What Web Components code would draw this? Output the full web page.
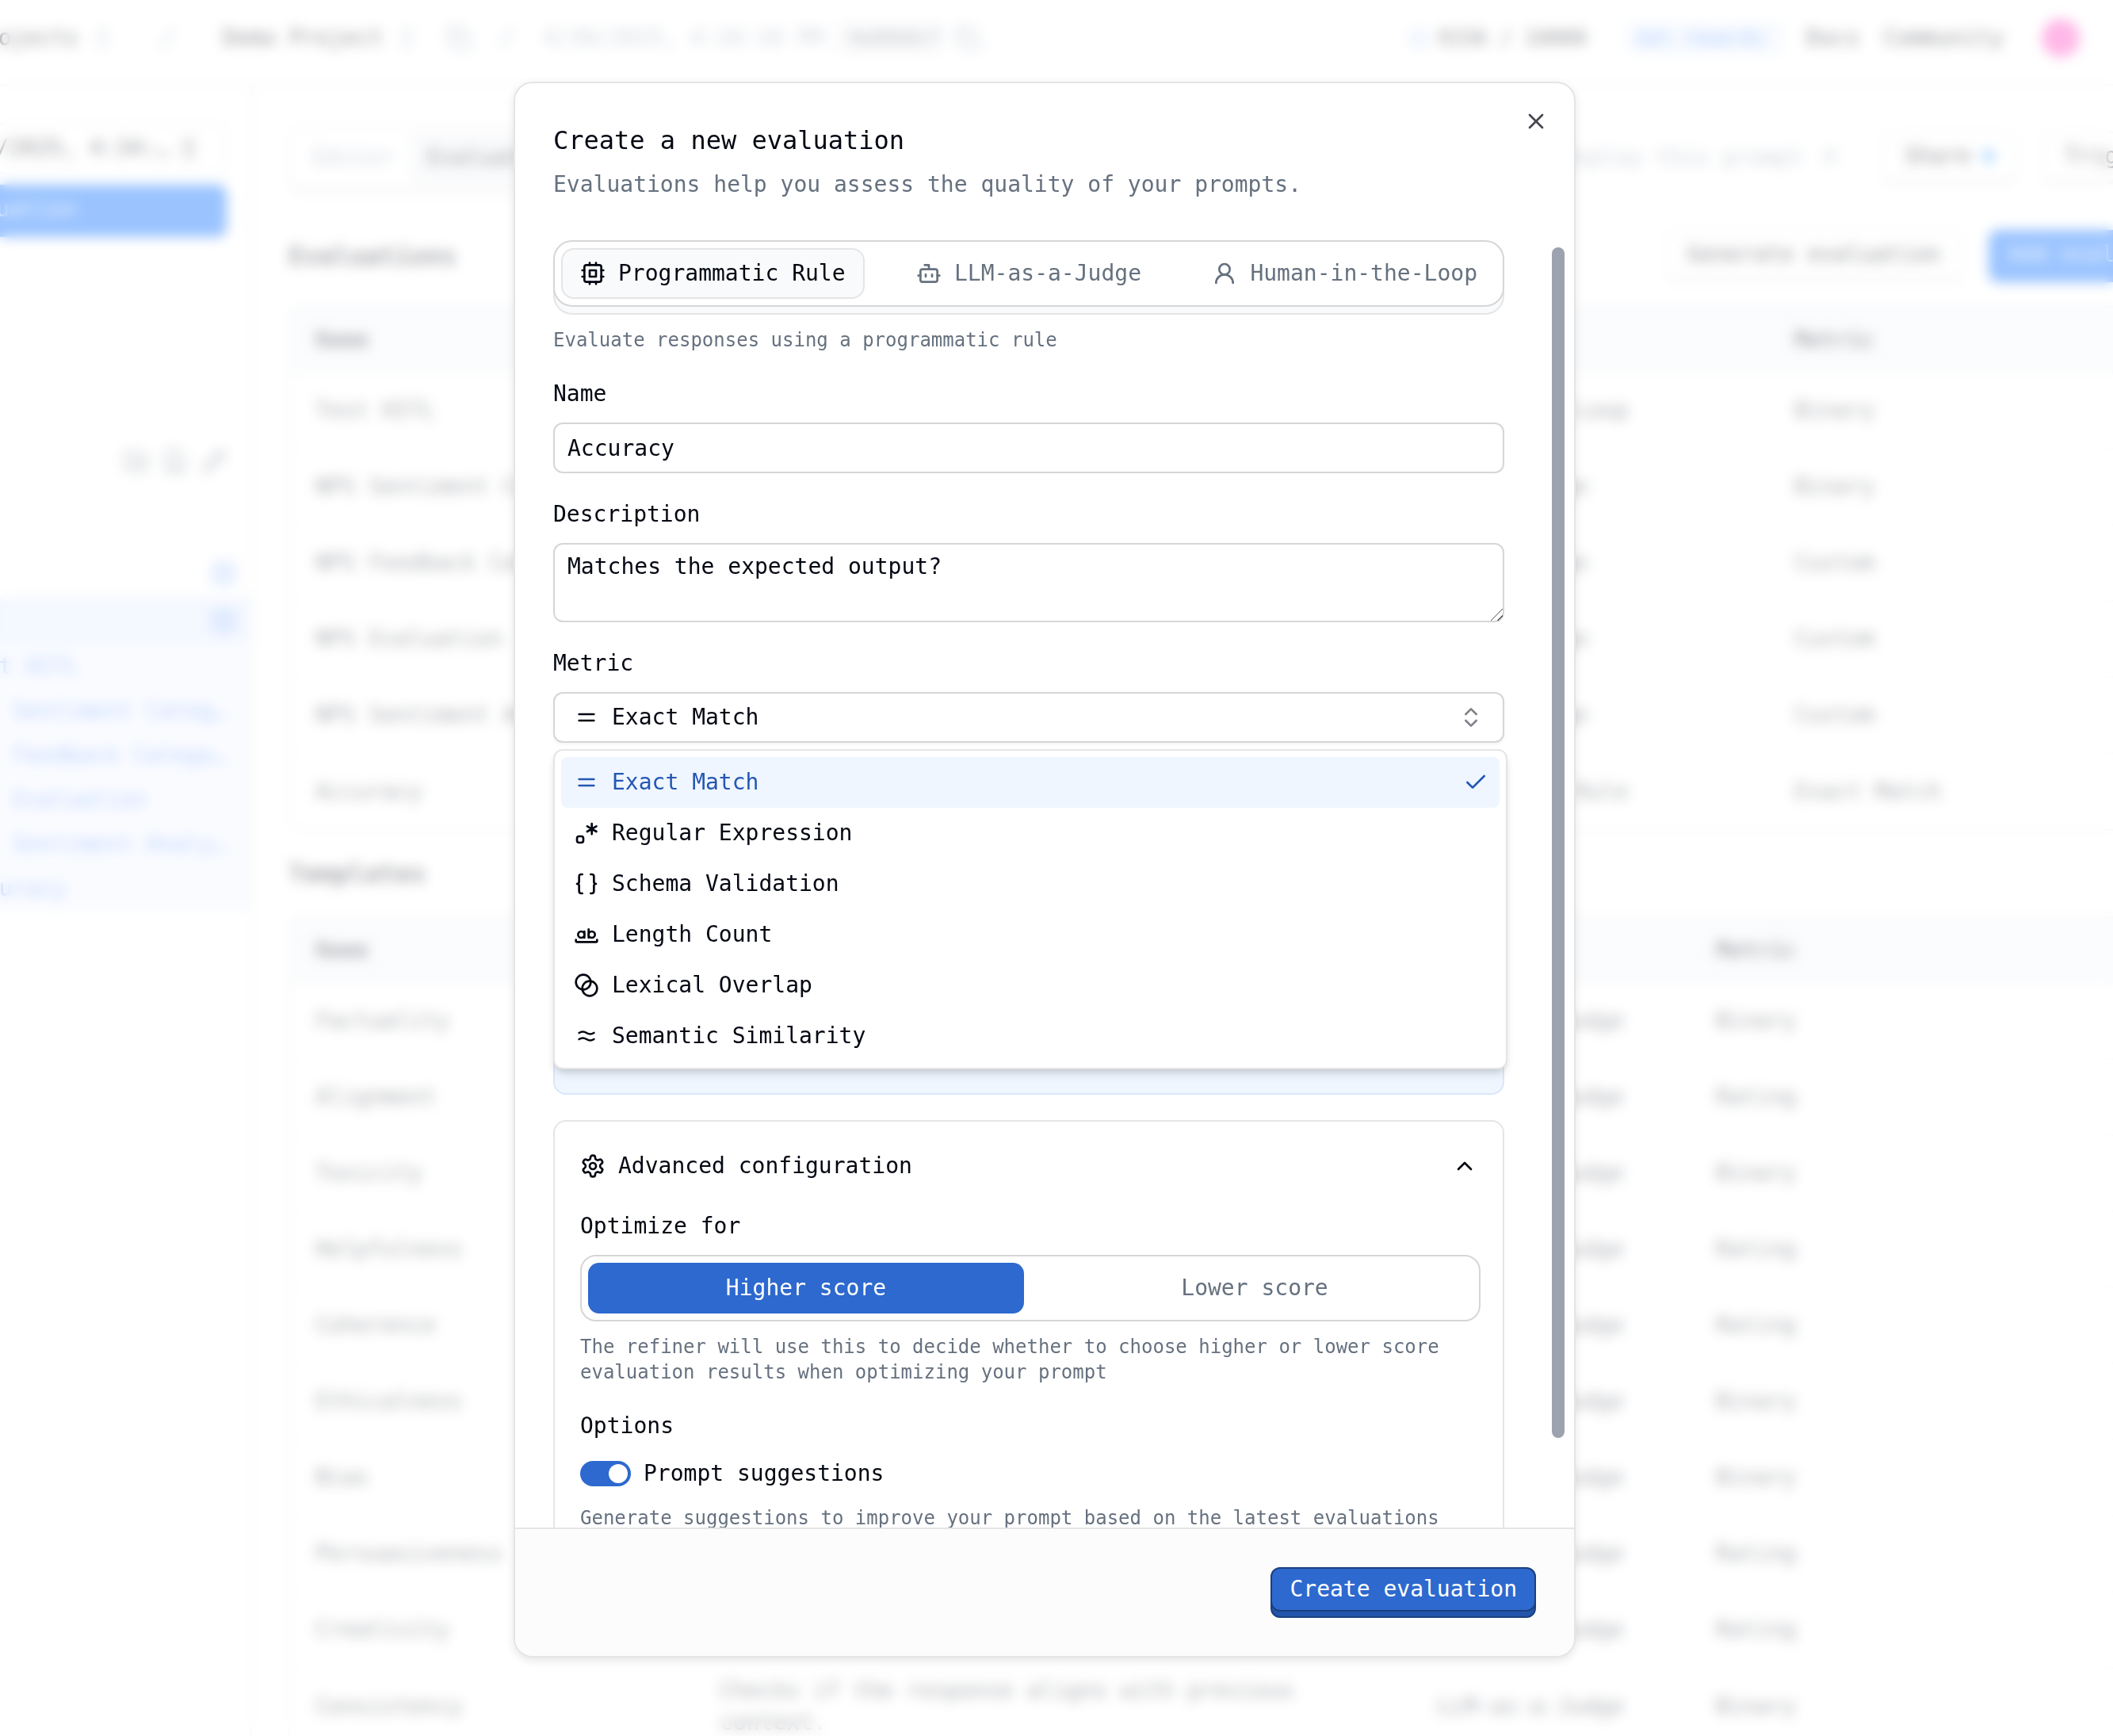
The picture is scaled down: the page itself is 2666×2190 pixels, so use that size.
<!DOCTYPE html>
<html lang="en">
<head>
<meta charset="utf-8">
<title>Create a new evaluation</title>
<style>
  html, body { margin: 0; height: 100%; }
  body {
    --fg: #030712; --muted: #66717f; --line: #e5e5e5; --input: #d6d6d6;
    --primary: #2d69ce; --accent: #eff6ff; --accent-fg: #2457b3; --soft: #f9fafb;
    background: #fff; color: var(--fg); overflow: hidden;
    font: 28px/40px "DejaVu Sans Mono", "Liberation Mono", monospace;
  }
</style>
</head>
<body>
<app-page></app-page>
<modal-dialog heading="Create a new evaluation" summary="Evaluations help you assess the quality of your prompts.">
  <evaluation-form></evaluation-form>
  <primary-button slot="footer">Create evaluation</primary-button>
</modal-dialog>

<script>
const BASE = `*{box-sizing:border-box;margin:0}button,input,textarea,select{font:inherit;color:inherit}button{background:none;border:0;padding:0}`;
function define(name, render) {
  customElements.define(name, class extends HTMLElement {
    constructor() { super(); this.attachShadow({ mode: "open" }); }
    connectedCallback() {
      if (this.shadowRoot.childNodes.length) return;
      const t = document.createElement("template");
      t.innerHTML = render(this);
      this.shadowRoot.append(t.content.cloneNode(true));
    }
  });
}

const ICONS = {
  cpu: '<rect x="4" y="4" width="16" height="16" rx="2"/><rect x="9" y="9" width="6" height="6"/><path d="M15 2v2M15 20v2M2 15h2M2 9h2M20 15h2M20 9h2M9 2v2M9 20v2"/>',
  bot: '<path d="M12 8V4H8"/><rect width="16" height="12" x="4" y="8" rx="2"/><path d="M2 14h2M20 14h2M15 13v2M9 13v2"/>',
  user: '<circle cx="12" cy="8" r="5"/><path d="M20 21a8 8 0 0 0-16 0"/>',
  equal: '<path d="M5 9h14M5 15h14"/>',
  regex: '<path d="M17 3v10M12.67 5.5l8.66 5M12.67 10.5l8.66-5M9 17a2 2 0 0 0-2-2H5a2 2 0 0 0-2 2v2a2 2 0 0 0 2 2h2a2 2 0 0 0 2-2v-2z"/>',
  braces: '<path d="M8 3H7a2 2 0 0 0-2 2v5a2 2 0 0 1-2 2 2 2 0 0 1 2 2v5c0 1.1.9 2 2 2h1M16 21h1a2 2 0 0 0 2-2v-5c0-1.1.9-2 2-2a2 2 0 0 1-2-2V5a2 2 0 0 0-2-2h-1"/>',
  word: '<circle cx="7" cy="12" r="3"/><path d="M10 9v6"/><circle cx="17" cy="12" r="3"/><path d="M14 7v8M22 17v1c0 .5-.5 1-1 1H3c-.5 0-1-.5-1-1v-1"/>',
  blend: '<circle cx="9" cy="9" r="7"/><circle cx="15" cy="15" r="7"/>',
  approx: '<path d="M5 15a6.5 6.5 0 0 1 7 0 6.5 6.5 0 0 0 7 0M5 9a6.5 6.5 0 0 1 7 0 6.5 6.5 0 0 0 7 0"/>',
  settings: '<path d="M12.22 2h-.44a2 2 0 0 0-2 2v.18a2 2 0 0 1-1 1.73l-.43.25a2 2 0 0 1-2 0l-.15-.08a2 2 0 0 0-2.73.73l-.22.38a2 2 0 0 0 .73 2.73l.15.1a2 2 0 0 1 1 1.72v.51a2 2 0 0 1-1 1.74l-.15.09a2 2 0 0 0-.73 2.73l.22.38a2 2 0 0 0 2.73.73l.15-.08a2 2 0 0 1 2 0l.43.25a2 2 0 0 1 1 1.73V20a2 2 0 0 0 2 2h.44a2 2 0 0 0 2-2v-.18a2 2 0 0 1 1-1.73l.43-.25a2 2 0 0 1 2 0l.15.08a2 2 0 0 0 2.73-.73l.22-.39a2 2 0 0 0-.73-2.73l-.15-.08a2 2 0 0 1-1-1.74v-.5a2 2 0 0 1 1-1.74l.15-.09a2 2 0 0 0 .73-2.73l-.22-.38a2 2 0 0 0-2.73-.73l-.15.08a2 2 0 0 1-2 0l-.43-.25a2 2 0 0 1-1-1.73V4a2 2 0 0 0-2-2z"/><circle cx="12" cy="12" r="3"/>',
  up: '<path d="M18 15l-6-6-6 6"/>',
  updown: '<path d="M7 15l5 5 5-5M7 9l5-5 5 5"/>',
  check: '<path d="M20 6L9 17l-5-5"/>',
  close: '<path d="M18 6L6 18M6 6l12 12"/>',
  copy: '<rect x="8" y="8" width="14" height="14" rx="2"/><path d="M4 16c-1.100 0-2-.9-2-2V4c0-1.100.9-2 2-2h10c1.100 0 2 .9 2 2"/>',
  folder: '<path d="M12 10v6M9 13h6M20 20a2 2 0 0 0 2-2V8a2 2 0 0 0-2-2h-8L10 3H4a2 2 0 0 0-2 2v13a2 2 0 0 0 2 2z"/>',
  file: '<path d="M15 2H6a2 2 0 0 0-2 2v16a2 2 0 0 0 2 2h12a2 2 0 0 0 2-2V7zM9 15h6M12 18v-6"/>',
  pencil: '<path d="M21 7a3 3 0 0 0-4-4L4 16l-2 6 6-2zM15 5l4 4"/>',
  square: '<rect x="3" y="3" width="18" height="18" rx="2"/><path d="M12 8v8M8 12h8"/>',
  slash: '<path d="M17 3L7 21"/>',
  external: '<path d="M7 17L17 7M8 7h9v9"/>'
};
define("ui-icon", el => `<style>:host{display:block;flex:none;width:32px;height:32px}svg{display:block;width:100%;height:100%;fill:none;stroke:currentColor;stroke-width:2;stroke-linecap:round;stroke-linejoin:round}</style>
<svg viewBox="0 0 24 24" aria-hidden="true">${ICONS[el.getAttribute("name")]}</svg>`);

define("primary-button", () => `<style>${BASE}
:host{display:block;height:64px}
button{display:block;height:56px;padding:0 22px;border:2px solid #1b407f;border-radius:12px;background:var(--primary);color:#fff;line-height:52px;box-shadow:0 8px 0 -2px #2454ab,0 8px 0 0 #1b407f}
</style><button type="button"><slot></slot></button>`);

define("modal-dialog", el => `<style>${BASE}
:host{position:fixed;inset:0;display:flex;justify-content:center;padding:103px 30px 99px 0;background:rgba(255,255,255,.6);-webkit-backdrop-filter:blur(8px);backdrop-filter:blur(8px)}
section{position:relative;display:flex;flex-direction:column;width:1340px;max-width:100%;border:2px solid var(--line);border-radius:24px;background:#fff;overflow:hidden;box-shadow:0 4px 12px rgba(0,0,0,.1)}
header{padding:48px;display:flex;flex-direction:column;gap:12px}
h2{font-size:32px;line-height:48px;font-weight:500}
p{color:var(--muted)}
.x{position:absolute;top:32px;right:32px;color:#45474f}
.body{flex:1;min-height:0;display:flex;gap:60px;padding:2px 12px 0 48px}
.content{flex:1;min-width:0;overflow:visible}
.track{width:16px;padding-top:9px}
.thumb{height:93%;border-radius:8px;background:#9ca3af}
footer{position:relative;display:flex;justify-content:flex-end;padding:48px;border-top:2px solid var(--line);background:#fcfcfc}
</style>
<section role="dialog" aria-modal="true" aria-labelledby="t">
<header><h2 id="t">${el.getAttribute("heading")}</h2><p>${el.getAttribute("summary")}</p></header>
<button class="x" type="button" aria-label="Close"><ui-icon name="close"></ui-icon></button>
<div class="body"><div class="content"><slot></slot></div><div class="track"><div class="thumb"></div></div></div>
<footer><slot name="footer"></slot></footer>
</section>`);

define("type-tabs", () => `<style>${BASE}
:host{display:block;padding-bottom:10px}
div{display:flex;justify-content:space-between;height:84px;padding:8px;border:2px solid var(--input);border-radius:24px;background:#fff;box-shadow:0 10px 0 -2px var(--soft),0 10px 0 0 var(--line)}
button{display:flex;align-items:center;gap:16px;padding:0 22px;border:2px solid transparent;border-radius:16px;color:var(--muted);white-space:nowrap}
button[aria-selected=true]{color:var(--fg);background:var(--soft);border-color:var(--line)}
</style><div role="tablist">
<button type="button" role="tab" aria-selected="true"><ui-icon name="cpu"></ui-icon>Programmatic Rule</button>
<button type="button" role="tab" aria-selected="false"><ui-icon name="bot"></ui-icon>LLM-as-a-Judge</button>
<button type="button" role="tab" aria-selected="false"><ui-icon name="user"></ui-icon>Human-in-the-Loop</button></div>`);

define("text-field", el => {
  const area = el.hasAttribute("multiline"), v = el.getAttribute("value");
  return `<style>${BASE}
:host{display:flex;flex-direction:column;gap:16px}label{font-weight:500}
input,textarea{display:block;width:100%;border:2px solid var(--input);border-radius:12px;background:#fff;padding:0 16px;outline:0}
input{height:64px}textarea{height:100px;padding:8px 16px;resize:vertical}
textarea::-webkit-resizer{background:linear-gradient(135deg,transparent 47%,#555 47% 53%,transparent 53% 76%,#555 76% 82%,transparent 82%)}
</style><label for="c">${el.getAttribute("label")}</label>
${area ? `<textarea id="c">${v}</textarea>` : `<input id="c" type="text" value="${v}">`}`;
});

const METRICS = [["equal","Exact Match"],["regex","Regular Expression"],["braces","Schema Validation"],["word","Length Count"],["blend","Lexical Overlap"],["approx","Semantic Similarity"]];
define("metric-select", () => `<style>${BASE}
:host{display:flex;flex-direction:column;gap:16px}label{font-weight:500}
.box{position:relative;display:grid;align-items:center}
.box>*{grid-area:1/1}
select{appearance:none;width:100%;height:64px;padding:0 72px;border:2px solid var(--input);border-radius:12px;background:#fff;outline:0;box-shadow:0 2px 4px rgba(0,0,0,.05)}
.lead{margin-left:26px;z-index:1}.tail{margin-right:26px;justify-self:end;z-index:1;color:#81838a}
ul{position:absolute;z-index:2;top:calc(100% + 8px);left:0;right:-4px;list-style:none;padding:8px;border:2px solid var(--line);border-radius:12px;background:#fff;box-shadow:0 8px 12px -2px rgba(0,0,0,.12),0 4px 8px -4px rgba(0,0,0,.12)}
li{display:flex;align-items:center;gap:16px;height:64px;padding:0 14px 0 16px;border-radius:8px}
li[aria-selected=true]{background:var(--accent);color:var(--accent-fg)}
li span{flex:1}
</style><label for="m">Metric</label>
<div class="box"><select id="m">${METRICS.map(m => `<option>${m[1]}</option>`).join("")}</select>
<ui-icon class="lead" name="equal"></ui-icon><ui-icon class="tail" name="updown"></ui-icon>
<ul role="listbox" aria-label="Metric">${METRICS.map((m, i) => `<li role="option" aria-selected="${!i}"><ui-icon name="${m[0]}"></ui-icon><span>${m[1]}</span>${i ? "" : '<ui-icon name="check"></ui-icon>'}</li>`).join("")}</ul></div>`);

define("segmented-control", () => `<style>${BASE}
:host{display:flex;flex-direction:column;gap:16px}
.box{display:flex;gap:16px;height:84px;padding:8px;border:2px solid var(--input);border-radius:20px}
button{flex:1;border-radius:14px;color:var(--muted)}
button[aria-pressed=true]{background:var(--primary);color:#fff}
p{font-size:24px;line-height:32px;color:var(--muted)}
</style><span id="l">Optimize for</span><div class="box" role="group" aria-labelledby="l">
<button type="button" aria-pressed="true">Higher score</button><button type="button" aria-pressed="false">Lower score</button></div>
<p>The refiner will use this to decide whether to choose higher or lower score evaluation results when optimizing your prompt</p>`);

define("toggle-option", el => `<style>${BASE}
:host{display:block}
.row{display:flex;align-items:center;gap:16px;height:48px;margin-bottom:16px}
input{appearance:none;display:flex;justify-content:flex-end;width:64px;height:32px;padding:4px;border-radius:16px;background:var(--primary)}
input::before{content:"";width:24px;height:24px;border-radius:50%;background:#fff}
p{font-size:24px;line-height:32px;color:var(--muted)}
</style><div class="row"><input id="s" type="checkbox" role="switch" checked><label for="s">${el.getAttribute("label")}</label></div><p><slot></slot></p>`);

define("advanced-panel", () => `<style>${BASE}
:host{display:flex;flex-direction:column;gap:36px;padding:36px 28px 32px 32px;border:2px solid var(--line);border-radius:16px}
button{display:flex;align-items:center;gap:16px;padding-right:4px;text-align:left}
button span{flex:1}
.in{display:flex;flex-direction:column;gap:32px}
.opts{display:flex;flex-direction:column;gap:16px}
</style><button type="button" aria-expanded="true"><ui-icon name="settings"></ui-icon><span>Advanced configuration</span><ui-icon name="up"></ui-icon></button>
<div class="in"><segmented-control></segmented-control>
<div class="opts"><span>Options</span><toggle-option label="Prompt suggestions">Generate suggestions to improve your prompt based on the latest evaluations</toggle-option></div></div>`);

define("evaluation-form", () => `<style>${BASE}
:host{display:flex;flex-direction:column;gap:32px}
.type{display:flex;flex-direction:column;gap:16px}
p{font-size:24px;line-height:32px;color:var(--muted)}
.note{height:412px;border:2px solid #dbe6fa;border-radius:16px;background:var(--accent)}
</style><div class="type"><type-tabs></type-tabs><p>Evaluate responses using a programmatic rule</p></div>
<text-field label="Name" value="Accuracy"></text-field>
<text-field label="Description" multiline value="Matches the expected output?"></text-field>
<metric-select></metric-select><div class="note"></div><advanced-panel></advanced-panel>`);

define("app-header", () => `<style>${BASE}
:host{display:flex;flex:none;align-items:center;justify-content:space-between;height:108px;padding:0 42px 10px 0;border-bottom:2px solid #e5e5e5;white-space:nowrap}
.l,.r{display:flex;align-items:center}
a{color:inherit;text-decoration:none}
.l{gap:14px;margin-left:-36px}ui-icon{color:#94a3b8}
.sep{margin:0 40px 0 36px}
.copy{margin-left:20px}.s2{margin-left:14px}
.date{color:#94a0b2;padding-left:16px}
.hash{font-size:24px;padding:0 4px 0 18px;border-radius:8px;background:#f3f4f6;color:#66717f}
.r{gap:30px}.use{font-size:26px;display:flex;align-items:center;gap:12px}
.use i{width:24px;height:24px;border:4px solid #a9c9fb;border-radius:50%}
.gift{font-size:24px;margin-left:20px;padding:0 24px 0 14px;border-radius:8px;background:#eaf3ff;color:#3b82f6}
.av{width:48px;height:48px;border-radius:50%;background:#ff4ec5;margin-left:18px}
</style><div class="l"><a href="#">Projects</a><ui-icon name="updown"></ui-icon><ui-icon class="sep" name="slash"></ui-icon><a href="#">Demo Project</a><ui-icon name="updown"></ui-icon><ui-icon class="copy" name="copy"></ui-icon><ui-icon class="s2" name="slash"></ui-icon><span class="date">4/30/2025, 4:34:10 PM</span><span class="hash">9a90b8cf</span><ui-icon name="copy"></ui-icon></div>
<div class="r"><span class="use"><i></i>9156 / 10000</span><a class="gift" href="#">Get rewards</a><a href="#">Docs</a><a href="#">Community</a><span class="av"></span></div>`);

define("app-sidebar", () => `<style>${BASE}
:host{display:flex;flex:none;justify-content:flex-end;width:318px;border-right:2px solid #e5e5e5;overflow:hidden}
nav{flex:none;width:456px;display:flex;flex-direction:column;padding-top:47px;white-space:nowrap}
.sel{display:flex;align-items:center;justify-content:flex-end;gap:8px;height:64px;margin-right:30px;padding-right:30px;border:2px solid #e5e5e5;border-radius:12px}
.new{height:66px;margin:14px 30px 0 0;border-radius:12px;background:#056bff;color:#cfe2ff;text-align:left;padding:0 0 4px 0}
.tools{display:flex;justify-content:flex-end;gap:17px;margin:267px 30px 95px 0;color:#66717f}
.row{display:flex;align-items:center;justify-content:flex-end;height:60px;padding-right:18px;color:#3b82f6}
.row.on{background:#e4edff}
ul{list-style:none;padding:0 0 0 88px;background:#f2f6ff}
li{height:56px;line-height:56px;color:#5b93fa}
</style><nav><button class="sel" type="button">4/30/2025, 4:34:…<ui-icon name="updown"></ui-icon></button>
<button class="new" type="button">New evaluation</button>
<div class="tools"><ui-icon name="folder"></ui-icon><ui-icon name="file"></ui-icon><ui-icon name="pencil"></ui-icon></div>
<div class="row"><ui-icon name="square"></ui-icon></div><div class="row on"><ui-icon name="square"></ui-icon></div>
<ul><li>Test HITL</li><li>NPS Sentiment Categ…</li><li>NPS Feedback Catego…</li><li>NPS Evaluation</li><li>NPS Sentiment Analy…</li><li>Accuracy</li></ul></nav>`);

const EVALS = [["Test HITL","","Human-in-the-Loop","Binary"],["NPS Sentiment Ca…","","LLM-as-a-Judge","Binary"],["NPS Feedback Cat…","","LLM-as-a-Judge","Custom"],["NPS Evaluation","","LLM-as-a-Judge","Custom"],["NPS Sentiment An…","","LLM-as-a-Judge","Custom"],["Accuracy","","Programmatic Rule","Exact Match"]];
const TEMPLATES = ["Factuality:Binary","Alignment:Rating","Toxicity:Binary","Helpfulness:Rating","Coherence:Rating","Ethicalness:Binary","Bias:Binary","Persuasiveness:Rating","Creativity:Rating","Consistency:Binary"]
  .map(s => s.split(":")).map(([n, m]) => [n, n === "Consistency" ? "Checks if the response aligns with previous context." : "", "LLM-as-a-Judge", m]);
define("data-table", el => {
  const rows = el.getAttribute("source") === "evals" ? EVALS : TEMPLATES;
  const cols = el.getAttribute("cols").split(" ");
  return `<style>${BASE}
:host{display:block;border:2px solid #e5e5e5;border-radius:16px;overflow:hidden}
table{width:100%;table-layout:fixed;border-collapse:collapse}
th,td{padding:0 32px;text-align:left;font-weight:400;white-space:nowrap}
td:nth-child(2){white-space:normal}
th{height:82px;background:#f4f7fb;font-weight:700;color:#3b3f48}
td{height:96px;border-top:2px solid #f3f3f3;color:#3a3f4a}
</style><table><colgroup>${cols.map(c => `<col style="width:${c}px">`).join("")}<col></colgroup>
<thead><tr><th>Name</th><th aria-label="Description"></th><th aria-label="Type"></th><th>Metric</th></tr></thead>
<tbody>${rows.map(r => `<tr>${r.map(c => `<td>${c}</td>`).join("")}</tr>`).join("")}</tbody></table>`;
});

define("app-page", () => `<style>${BASE}
:host{display:flex;flex-direction:column;height:100vh;overflow:hidden}
.cols{flex:1;min-height:0;display:flex}
main{flex:none;width:calc(100% - 191px);padding:51px 0 0 46px}
.bar{display:flex;align-items:center;justify-content:space-between;white-space:nowrap}
.tabs{display:flex;height:80px;padding:6px;border:2px solid #e5e5e5;border-radius:20px;box-shadow:0 6px 0 #eceef0}
.tabs button{padding:0 22px;border-radius:14px;color:#94a3b8}.tabs .on{background:#f1f3f6;color:#1d2230}
.acts{display:flex;align-items:center;gap:32px}
.out{display:flex;align-items:center;gap:14px;height:66px;padding:0 26px;border:2px solid #e8e8e8;border-bottom-width:6px;border-radius:12px;background:#fff}
.blue{height:66px;padding:0 24px 4px;border-radius:12px;background:#056bff;color:#cfe2ff}
.hint{display:flex;align-items:center;gap:16px;color:#94a0b2;margin-right:20px}
.dot{width:16px;height:16px;border-radius:50%;background:#3ba0ff}
.wide{width:216px}
h3{font-size:32px;line-height:48px;font-weight:700;color:#33363f}
.t1{margin:51px 0 30px}.t2{margin:30px 0}
</style><app-header></app-header><div class="cols"><app-sidebar></app-sidebar><main>
<div class="bar"><div class="tabs"><button type="button">Editor</button><button class="on" type="button">Evaluations</button></div>
<div class="acts"><span class="hint">Deploy this prompt<ui-icon name="external"></ui-icon></span><button class="out" type="button">Share<span class="dot"></span></button><button class="out wide" type="button">Triggers</button></div></div>
<div class="bar t1"><h3>Evaluations</h3><div class="acts"><button class="out" type="button">Generate evaluation</button><button class="blue" type="button">Add evaluation</button></div></div>
<data-table source="evals" cols="510 860 496"></data-table>
<h3 class="t2">Templates</h3>
<data-table source="templates" cols="510 905 352"></data-table>
</main></div>`);
</script>
</body>
</html>
